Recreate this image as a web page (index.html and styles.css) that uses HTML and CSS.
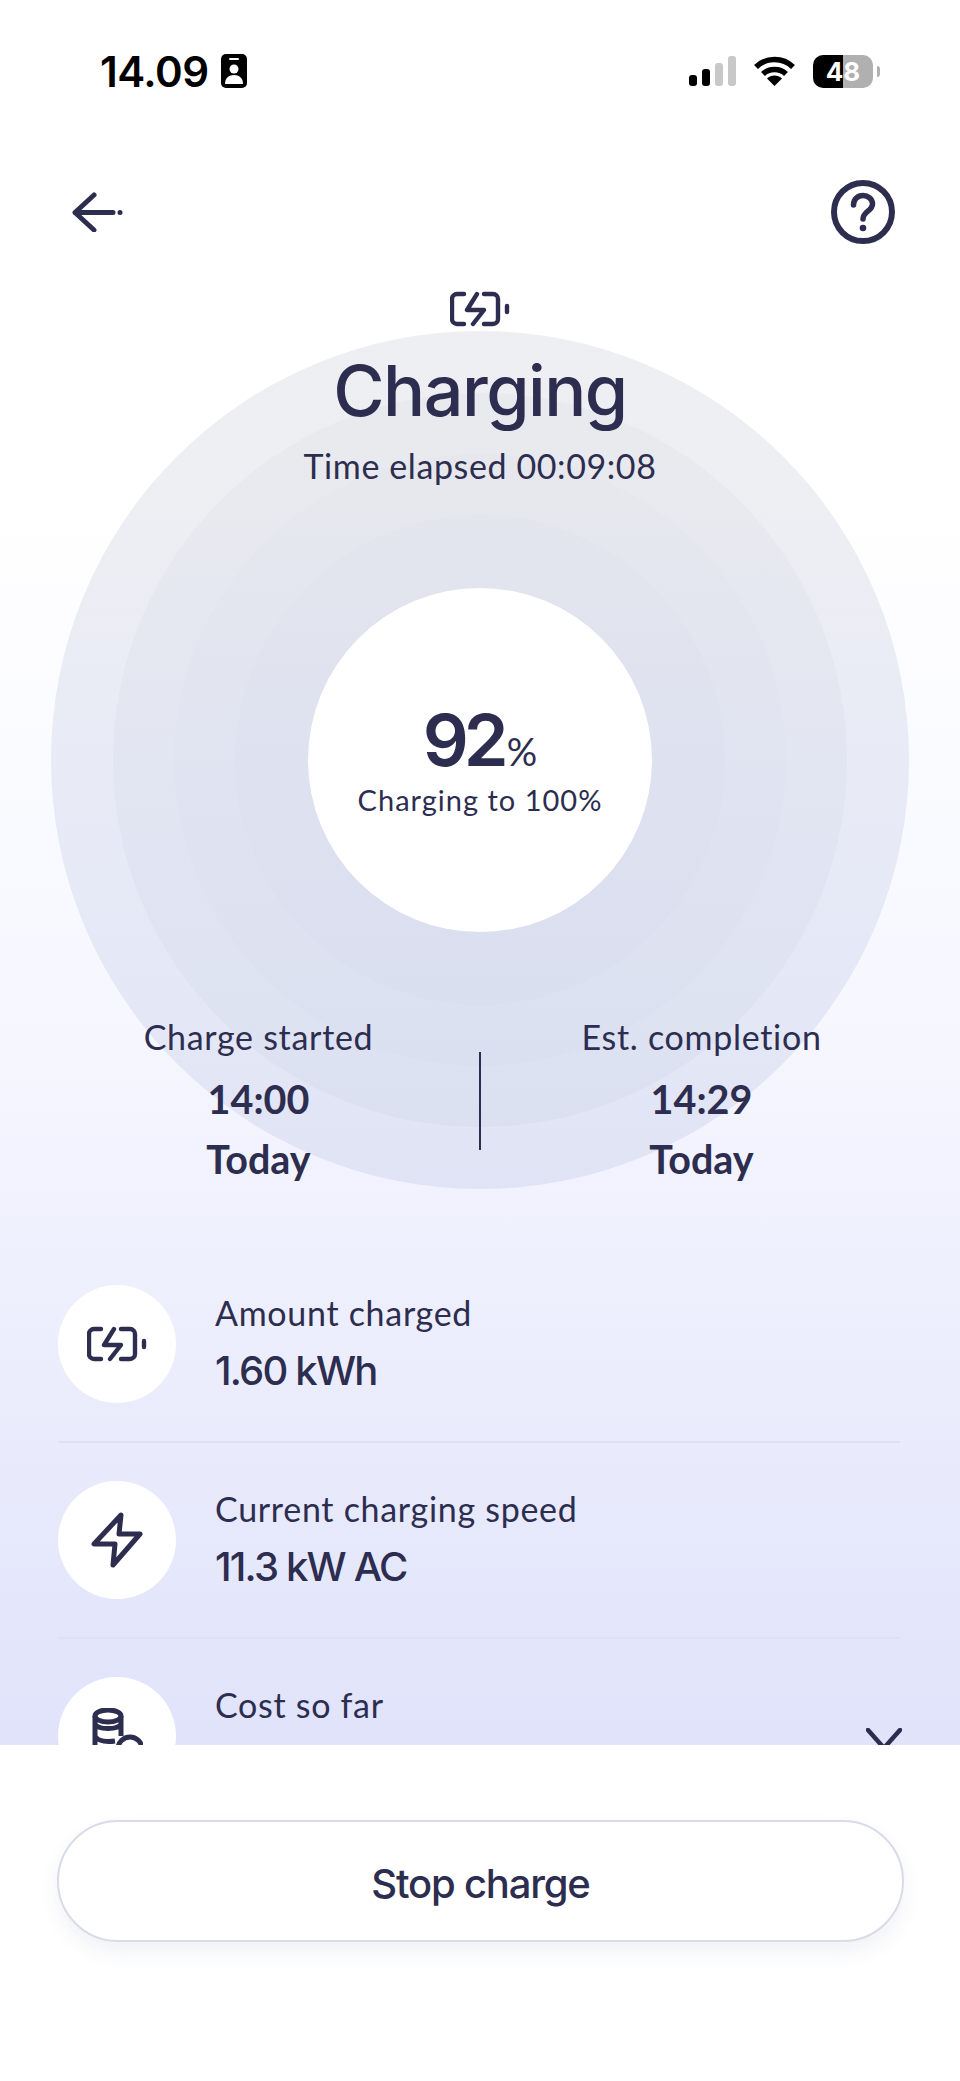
FILE: index.html
```html
<!DOCTYPE html>
<html lang="en">
<head>
<meta charset="UTF-8">
<meta name="viewport" content="width=device-width, initial-scale=1.0">
<title>Charging</title>
<link rel="stylesheet" href="styles.css">
</head>
<body>

<div class="screen">
    <div class="content">
        <div class="status-bar">
            <div class="status-left">
                <span class="clock">14.09</span>
                <svg class="badge" viewBox="0 0 26 34">
                    <rect width="26" height="34" rx="5" fill="#000"/>
                    <rect x="8" y="4" width="10" height="2" rx="1" fill="#fff"/>
                    <circle cx="13" cy="15" r="4.5" fill="#fff"/>
                    <path d="M4 30c0-6 4-9 9-9s9 3 9 9z" fill="#fff"/>
                </svg>
            </div>
            <div class="status-right">
                <div class="signal">
                    <span class="bar bar1"></span>
                    <span class="bar bar2"></span>
                    <span class="bar bar3"></span>
                    <span class="bar bar4"></span>
                </div>
                <svg class="wifi" viewBox="0 0 41 30">
                    <path d="M2 11C12 1 29 1 39 11" fill="none" stroke="#000" stroke-width="5.5"/>
                    <path d="M9 18C15 12 26 12 32 18" fill="none" stroke="#000" stroke-width="5.5"/>
                    <path d="M13 22.5c4-4 11-4 15 0L20.500 30z" fill="#000"/>
                </svg>
                <div class="phone-battery">
                    <div class="phone-battery-body"><span>48</span></div>
                    <span class="phone-battery-nub"></span>
                </div>
            </div>
        </div>

        <div class="nav">
            <svg class="back" viewBox="0 0 52 40">
                <path d="M22 3 3 20.500 22 38M3 20.500H41" fill="none" stroke="#2d2d4f" stroke-width="5" stroke-linecap="round" stroke-linejoin="round"/>
                <circle cx="48" cy="20.500" r="2.500" fill="#2d2d4f"/>
            </svg>
            <svg class="help" viewBox="0 0 64 64">
                <circle cx="32" cy="32" r="29" fill="none" stroke="#2d2d4f" stroke-width="6"/>
                <path d="M22.500 25c0-6 4.500-9.500 9.500-9.500s9.500 3.500 9.500 8.500c0 7-9.500 7.500-9.500 15" fill="none" stroke="#2d2d4f" stroke-width="5.500" stroke-linecap="round"/>
                <circle cx="32" cy="48" r="3.300" fill="#2d2d4f"/>
            </svg>
        </div>

        <div class="hero">
            <div class="ring ring1">
                <div class="ring ring2">
                    <div class="ring ring3">
                        <div class="ring ring4">
                            <div class="dial">
                                <div class="percent">92<span class="percent-sign">%</span></div>
                                <div class="dial-label">Charging to 100%</div>
                            </div>
                        </div>
                    </div>
                </div>
            </div>

            <div class="hero-head">
                <svg class="battery-icon" viewBox="0 0 60 36">
                    <path d="M14 3H7a5 5 0 0 0-5 5v20a5 5 0 0 0 5 5h7M34 3h9a5 5 0 0 1 5 5v20a5 5 0 0 1-5 5h-9M27 3 17 19H34L23 33" fill="none" stroke="#2d2d4f" stroke-width="4.400" stroke-linecap="round" stroke-linejoin="round"/>
                    <path d="M57 15v6" fill="none" stroke="#2d2d4f" stroke-width="4.400" stroke-linecap="round"/>
                </svg>
                <h1 class="title">Charging</h1>
                <div class="elapsed">Time elapsed 00:09:08</div>
            </div>

            <div class="times">
                <div class="time-col">
                    <div class="time-label">Charge started</div>
                    <div class="time-value">14:00</div>
                    <div class="time-value">Today</div>
                </div>
                <div class="time-divider"></div>
                <div class="time-col">
                    <div class="time-label">Est. completion</div>
                    <div class="time-value">14:29</div>
                    <div class="time-value">Today</div>
                </div>
            </div>
        </div>

        <div class="stats">
            <div class="stat">
                <div class="stat-icon">
                    <svg class="battery-icon" viewBox="0 0 60 36">
                        <path d="M14 3H7a5 5 0 0 0-5 5v20a5 5 0 0 0 5 5h7M34 3h9a5 5 0 0 1 5 5v20a5 5 0 0 1-5 5h-9M27 3 17 19H34L23 33" fill="none" stroke="#2d2d4f" stroke-width="4.400" stroke-linecap="round" stroke-linejoin="round"/>
                        <path d="M57 15v6" fill="none" stroke="#2d2d4f" stroke-width="4.400" stroke-linecap="round"/>
                    </svg>
                </div>
                <div class="stat-text">
                    <div class="stat-label">Amount charged</div>
                    <div class="stat-value">1.60 kWh</div>
                </div>
            </div>
            <div class="stat">
                <div class="stat-icon">
                    <svg class="bolt-icon" viewBox="0 0 52 56">
                        <path d="M30 3 3 32H24L22 53 49 22H28z" fill="none" stroke="#2d2d4f" stroke-width="5" stroke-linejoin="round"/>
                    </svg>
                </div>
                <div class="stat-text">
                    <div class="stat-label">Current charging speed</div>
                    <div class="stat-value">11.3 kW AC</div>
                </div>
            </div>
            <div class="stat">
                <div class="stat-icon">
                    <svg class="coins-icon" viewBox="0 0 52 56">
                        <ellipse cx="17" cy="8" rx="13" ry="6" fill="none" stroke="#2d2d4f" stroke-width="5"/>
                        <path d="M4 8V50M30 8V28M4 16c3 6 23 6 26 0M4 28c3 6 14 6 20 5M4 40c3 4 10 5 16 5" fill="none" stroke="#2d2d4f" stroke-width="5"/>
                        <circle cx="39" cy="41" r="12" fill="#fff" stroke="#2d2d4f" stroke-width="5"/>
                    </svg>
                </div>
                <div class="stat-text">
                    <div class="stat-label">Cost so far</div>
                </div>
                <svg class="chevron" viewBox="0 0 36 22">
                    <path d="M2 2 18 20 34 2" fill="none" stroke="#2d2d4f" stroke-width="4.500" stroke-linecap="round" stroke-linejoin="round"/>
                </svg>
            </div>
        </div>
    </div>

    <div class="footer">
        <div class="stop-button">Stop charge</div>
    </div>
</div>

</body>
</html>
```

FILE: styles.css
```css
* {
    box-sizing: border-box;
}
body {
    margin: 0;
    background: #fff;
    color: #2d2d4f;
    font-family: "Lato", sans-serif;
}
.screen {
    width: 960px;
    height: 2081px;
    display: flex;
    flex-direction: column;
    overflow: hidden;
}
.content {
    height: 1745px;
    overflow: hidden;
    background: linear-gradient(to bottom, #fff 0%, #fff 28%, #f6f7ff 58%, #e0e3fa 100%);
}

/* status bar */
.status-bar {
    height: 54px;
    margin-top: 44px;
    padding: 0 80px 0 100px;
    display: flex;
    justify-content: space-between;
    align-items: center;
    color: #000;
}
.status-left {
    display: flex;
    align-items: center;
    gap: 12px;
}
.clock {
    font-family: "Inter", sans-serif;
    font-size: 42px;
    font-weight: 600;
    letter-spacing: -0.5px;
}
.badge {
    width: 26px;
    height: 34px;
}
.status-right {
    display: flex;
    align-items: center;
}
.signal {
    display: flex;
    align-items: flex-end;
    gap: 5px;
    height: 30px;
    margin-right: 18px;
}
.bar {
    width: 8px;
    border-radius: 3px;
    background: #000;
}
.bar1 { height: 11px; }
.bar2 { height: 17px; }
.bar3 { height: 23px; background: #c8c8c8; }
.bar4 { height: 30px; background: #c8c8c8; }
.wifi {
    width: 41px;
    height: 30px;
    margin-right: 18px;
}
.phone-battery {
    display: flex;
    align-items: center;
    gap: 4px;
}
.phone-battery-body {
    width: 60px;
    height: 33px;
    border-radius: 10px;
    background: linear-gradient(to right, #000 50%, #b0b0b0 50%);
    display: flex;
    align-items: center;
    justify-content: center;
}
.phone-battery-body span {
    color: #fff;
    font-family: "Inter", sans-serif;
    font-size: 26px;
    font-weight: 700;
}
.phone-battery-nub {
    width: 3px;
    height: 11px;
    border-radius: 0 3px 3px 0;
    background: #b0b0b0;
}

/* nav */
.nav {
    margin-top: 82px;
    padding: 0 65px 0 72px;
    display: flex;
    justify-content: space-between;
    align-items: center;
}
.back {
    width: 52px;
    height: 40px;
}
.help {
    width: 64px;
    height: 64px;
}

/* hero */
.hero {
    position: relative;
    height: 898px;
    margin-top: 47px;
    display: flex;
    flex-direction: column;
    justify-content: space-between;
    align-items: center;
}
.ring {
    border-radius: 50%;
    display: flex;
    align-items: center;
    justify-content: center;
}
.ring1 {
    position: absolute;
    top: 40px;
    left: 51px;
    width: 858px;
    height: 858px;
    background: linear-gradient(to bottom, rgba(70, 75, 115, 0.09) 15%, rgba(70, 95, 165, 0.1) 50%);
}
.ring2 {
    width: 734px;
    height: 734px;
    background: rgba(70, 85, 130, 0.03);
}
.ring3 {
    width: 612px;
    height: 612px;
    background: rgba(70, 85, 130, 0.013);
}
.ring4 {
    width: 490px;
    height: 490px;
    background: rgba(70, 85, 130, 0.01);
}
.dial {
    width: 344px;
    height: 344px;
    padding-bottom: 8px;
    border-radius: 50%;
    background: #fff;
    display: flex;
    flex-direction: column;
    align-items: center;
    justify-content: center;
}
.percent {
    font-family: "Inter", sans-serif;
    font-size: 72px;
    font-weight: 600;
    line-height: 74px;
    letter-spacing: -5px;
    margin-top: 8px;
}
.percent-sign {
    font-family: "Lato", sans-serif;
    font-size: 38px;
    font-weight: 400;
    letter-spacing: 0;
    margin-left: 3px;
}
.dial-label {
    font-size: 29px;
    letter-spacing: 1px;
    margin-top: -6px;
}
.hero-head {
    position: relative;
    display: flex;
    flex-direction: column;
    align-items: center;
}
.battery-icon {
    width: 60px;
    height: 36px;
    display: block;
}
.title {
    margin: 24px 0 0;
    font-family: "Inter", sans-serif;
    font-size: 70px;
    font-weight: 500;
    line-height: 80px;
    letter-spacing: -1.5px;
}
.elapsed {
    margin-top: 13px;
    font-size: 34px;
    line-height: 44px;
    letter-spacing: 0.6px;
}
.times {
    position: relative;
    width: 100%;
    padding: 0 38px;
    display: grid;
    grid-template-columns: 1fr 2px 1fr;
    align-items: center;
}
.time-col {
    text-align: center;
}
.time-label {
    font-size: 34px;
    line-height: 40px;
    letter-spacing: 0.7px;
    margin-bottom: 12px;
}
.time-value {
    font-size: 39.5px;
    font-weight: 700;
    line-height: 60px;
}
.time-divider {
    width: 2px;
    height: 98px;
    margin-bottom: 5px;
    background: #2d2d4f;
}

/* stats list */
.stats {
    margin: 58px 60px 0 58px;
}
.stat {
    position: relative;
    display: flex;
    align-items: center;
    gap: 39px;
    padding: 38px 0;
    border-bottom: 2px solid #dfe1f0;
}
.stat-icon {
    width: 118px;
    height: 118px;
    flex-shrink: 0;
    border-radius: 50%;
    background: #fff;
    display: flex;
    align-items: center;
    justify-content: center;
}
.bolt-icon,
.coins-icon {
    width: 52px;
    height: 56px;
}
.stat-text {
    min-height: 104px;
}
.stat-label {
    font-size: 34px;
    line-height: 42px;
    letter-spacing: 0.7px;
}
.stat-value {
    margin-top: 12px;
    font-family: "Inter", sans-serif;
    font-size: 40px;
    font-weight: 500;
    line-height: 50px;
    letter-spacing: -1.8px;
}
.chevron {
    position: absolute;
    top: 89px;
    right: -2px;
    width: 36px;
    height: 22px;
}

/* footer */
.footer {
    flex: 1;
    background: #fff;
    padding: 75px 56px 0 57px;
}
.stop-button {
    height: 122px;
    padding-top: 4px;
    border: 2px solid #d9dbe8;
    border-radius: 61px;
    background: #fff;
    box-shadow: 0 10px 20px rgba(60, 70, 130, 0.07);
    display: flex;
    align-items: center;
    justify-content: center;
    font-family: "Inter", sans-serif;
    font-size: 40px;
    font-weight: 500;
    letter-spacing: -1.2px;
}
```
